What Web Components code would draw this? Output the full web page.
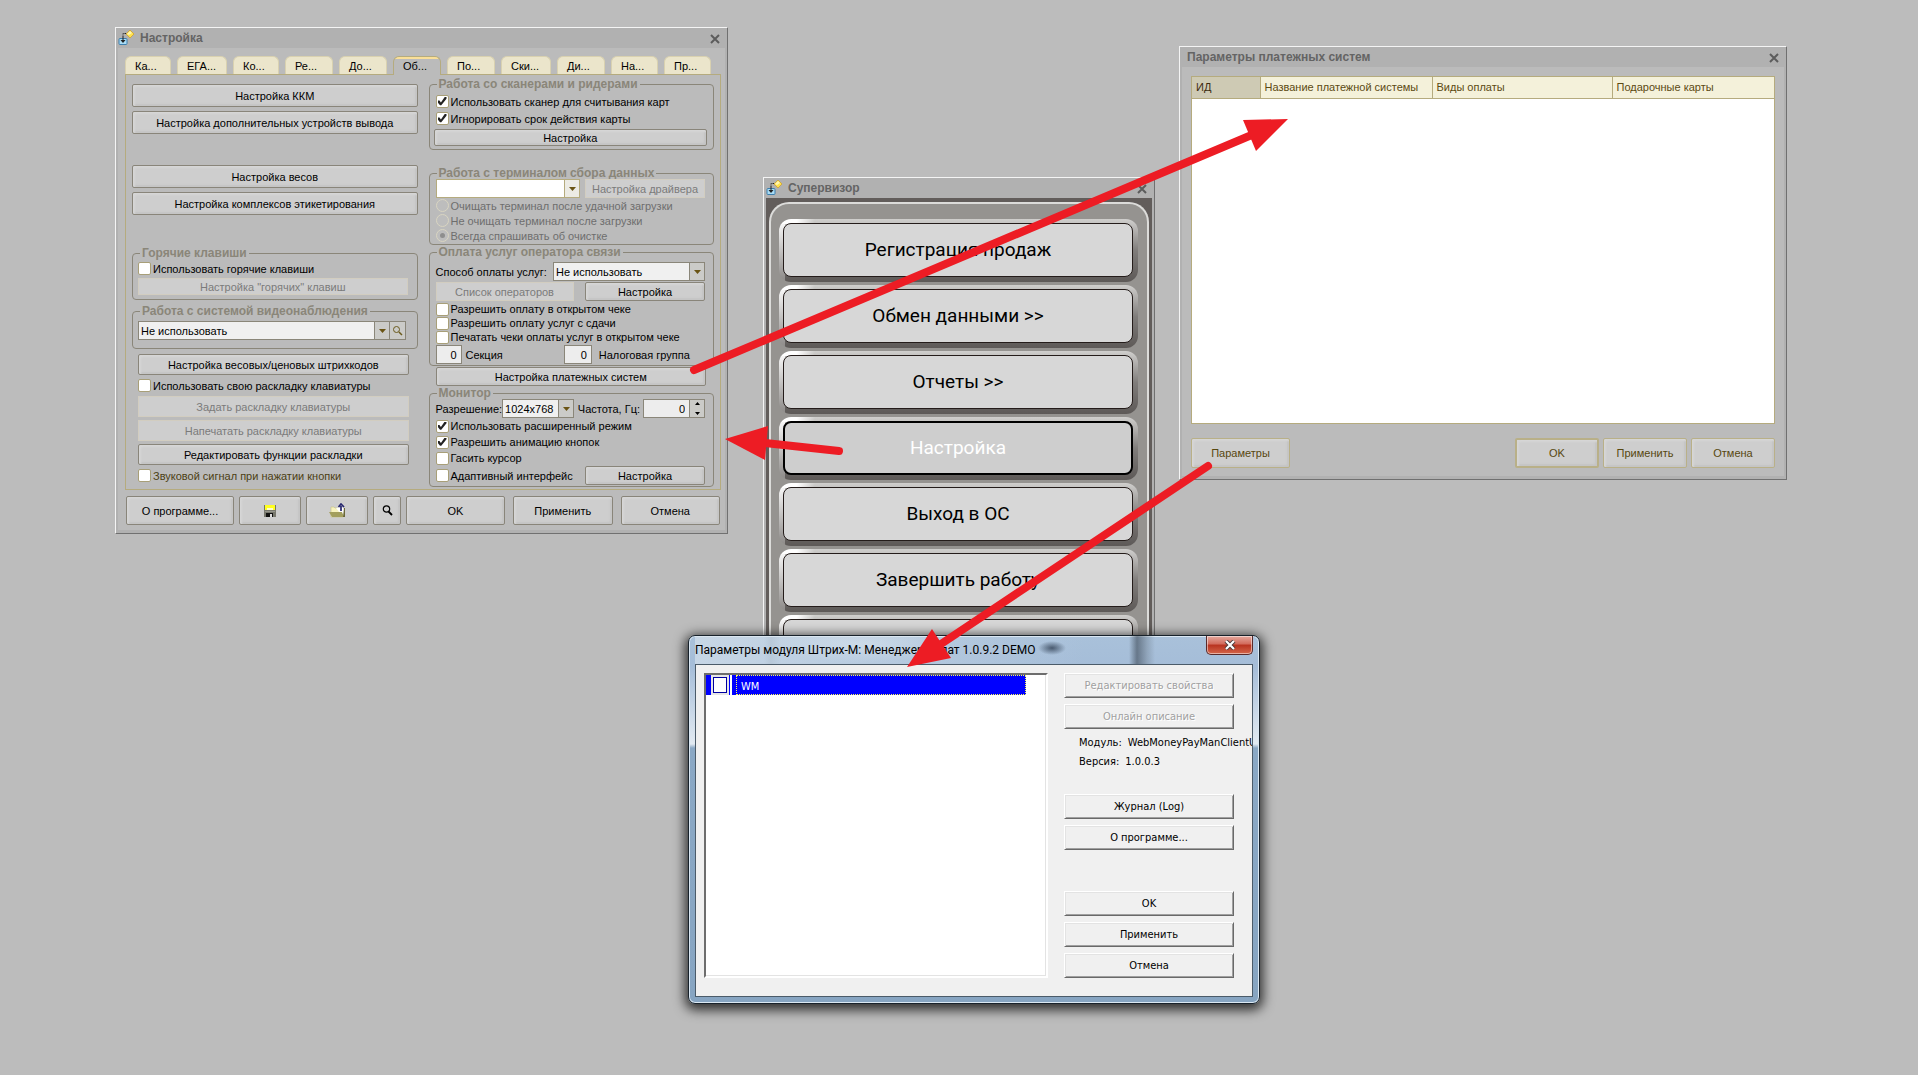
<!DOCTYPE html>
<html lang="ru">
<head>
<meta charset="utf-8">
<title>Настройка платежных систем</title>
<style>
    body {
        margin: 0;
        min-height: 100vh;
        background: #bcbcbc;
        font: 11px/14px "Liberation Sans", Arial, sans-serif;
        color: #000;
    }
</style>
</head>
<body>
<desktop-scene></desktop-scene>

<script>
class BaseElement extends HTMLElement {
    constructor() {
        super();
        this.attachShadow({ mode: 'open' });
    }

    connectedCallback() {
        const template = document.createElement('template');
        template.innerHTML = `
            <style>
            *, *::before { box-sizing: border-box; }
            button, input, select { font: inherit; color: inherit; margin: 0; }
            ${this.getStyles()}
            </style>
            ${this.getTemplate()}
        `;
        this.shadowRoot.appendChild(template.content.cloneNode(true));
    }

    getTemplate() {
        return '<slot></slot>';
    }

    getStyles() {
        return '';
    }
}

// Grey application window with a title bar
class AppWindow extends BaseElement {
    getTemplate() {
        const icon = this.hasAttribute('icon') ? `
            <svg width="17" height="17" viewBox="0 0 17 17" aria-hidden="true">
                <rect x="1" y="8.500" width="8" height="6" rx="1" fill="#a9dcf5" stroke="#3d7fae"/>
                <path d="M12 0l4 4-4 4-4-4z" fill="#ffe14d" stroke="#c99a2e" stroke-width=".7"/>
                <path d="M12 1l2 2-3 2-2-1z" fill="#fff6b0"/>
                <path d="M8 3.500H5V7" fill="none" stroke="#222" stroke-dasharray="1.500 1"/>
                <path d="M5 7v4" stroke="#222"/>
                <path d="M2.500 10h5L5 13z" fill="#222"/>
            </svg>` : '';
        return `
            <header>
                ${icon}
                <h1>${this.getAttribute('caption')}</h1>
                <button aria-label="Закрыть">
                    <svg width="10" height="10" viewBox="0 0 10 10"><path d="M1 1l8 8M9 1l-8 8" stroke="#5c5c5c" stroke-width="2"/></svg>
                </button>
            </header>
            <main><slot></slot></main>
        `;
    }

    getStyles() {
        return `
        :host {
            display: flex;
            flex-direction: column;
            box-sizing: border-box;
            border: 1px solid;
            border-color: #f4f4f4 #707070 #707070 #f4f4f4;
            background: #b1b1b1;
            padding: 0 2px 3px;
        }
        header {
            display: flex;
            align-items: center;
            height: 20px;
            padding: 0 3px 0 0;
        }
        header svg { display: block; flex: none; }
        h1 {
            flex: 1;
            margin: 0;
            padding-left: 5px;
            font-size: 12px;
            line-height: 22px;
            font-weight: bold;
            color: #646464;
        }
        button {
            padding: 2px 2px 0;
            border: 0;
            background: none;
        }
        main {
            flex: 1;
            background: #bbb;
        }
        `;
    }
}

class PushButton extends BaseElement {
    getTemplate() {
        const disabled = this.hasAttribute('disabled') ? 'disabled' : '';
        const label = this.hasAttribute('label') ? `aria-label="${this.getAttribute('label')}"` : '';
        return `<button ${disabled} ${label}><slot></slot></button>`;
    }

    getStyles() {
        return `
        :host {
            display: block;
            height: var(--button-height, 23px);
        }
        button {
            display: flex;
            align-items: center;
            justify-content: center;
            width: 100%;
            height: 100%;
            padding: 0;
            border: 1px solid #89857a;
            border-radius: 2px;
            background: #cecece;
            box-shadow: inset 2px 2px 2px #d6d6d6, inset -2px -2px 2px #c4c4c4;
            white-space: nowrap;
        }
        button:disabled {
            border-color: #d2cdc0;
            border-radius: 0;
            box-shadow: none;
            color: #7b7b7b;
        }
        :host([tone="sand"]) button {
            border-color: #b9b088;
            color: #57470f;
        }
        :host([default]) button { border-width: 2px; }
        `;
    }
}

class CheckItem extends BaseElement {
    getTemplate() {
        const type = this.getAttribute('type') || 'checkbox';
        const flags = ['checked', 'disabled'].filter((name) => this.hasAttribute(name)).join(' ');
        return `<label><input type="${type}" ${flags}><span><slot></slot></span></label>`;
    }

    getStyles() {
        return `
        :host { display: block; height: var(--check-height, 13px); }
        label {
            display: flex;
            align-items: center;
            gap: 2px;
            height: 100%;
            white-space: nowrap;
        }
        input {
            appearance: none;
            display: grid;
            place-items: center;
            flex: none;
            width: 13px;
            height: 13px;
            border: 1px solid #a89f78;
            border-radius: 2px;
            background: #fff;
        }
        input:checked::before {
            content: "";
            width: 9px;
            height: 9px;
            background: #222;
            clip-path: polygon(0 38%, 22% 38%, 38% 60%, 80% 0, 100% 0, 100% 20%, 42% 92%, 28% 92%, 0 58%);
        }
        input[type="radio"] {
            border-color: #d9d5c2;
            border-radius: 50%;
            background: #bdbdbd;
        }
        input[type="radio"]:checked::before {
            width: 5px;
            height: 5px;
            border-radius: 50%;
            background: #8e8e8e;
            clip-path: none;
        }
        input:disabled + span { color: #6e6e6e; }
        :host([tone="sand"]) { color: #4c3f14; }
        `;
    }
}

class GroupBox extends BaseElement {
    getTemplate() {
        return `
            <fieldset>
                <legend>${this.getAttribute('caption')}</legend>
                <div><slot></slot></div>
            </fieldset>
        `;
    }

    getStyles() {
        return `
        :host { display: block; }
        fieldset {
            min-width: 0;
            margin: 0;
            padding: 0;
            border: 1px solid #8a8679;
            border-radius: 4px;
        }
        legend {
            margin-left: 7px;
            padding: 0 2px;
            font-size: 12px;
            line-height: 12px;
            font-weight: bold;
            color: #8a8679;
        }
        div {
            display: flex;
            flex-direction: column;
            gap: var(--group-gap, 0);
            padding: var(--group-padding, 0 8px 1px 6px);
        }
        `;
    }
}

class ComboBox extends BaseElement {
    getTemplate() {
        const label = this.getAttribute('label');
        const text = this.hasAttribute('quiet') ? '' : `<span class="label">${label}</span>`;
        const search = this.hasAttribute('search') ? `
            <button aria-label="Найти">
                <svg width="11" height="11" viewBox="0 0 11 11"><circle cx="4.500" cy="4.500" r="3" fill="none" stroke="#6a5a1c"/><path d="M7 7l3 3" stroke="#6a5a1c" stroke-width="1.500"/></svg>
            </button>` : '';
        return `
            <label>
                ${text}
                <span class="field">
                    <select aria-label="${label}"><option>${this.getAttribute('value') || ''}</option></select>
                    <svg width="7" height="4" viewBox="0 0 7 4"><path d="M0 0h7L3.500 4z" fill="#6a5414"/></svg>
                </span>
            </label>
            ${search}
        `;
    }

    getStyles() {
        return `
        :host { display: flex; height: 19px; }
        label {
            display: flex;
            align-items: center;
            flex: 1;
            white-space: nowrap;
        }
        .label { flex: 1; }
        .field {
            display: grid;
            align-items: center;
            width: var(--combo-width, 100%);
            height: 19px;
        }
        select {
            grid-area: 1 / 1;
            appearance: none;
            width: 100%;
            height: 100%;
            padding: 0 16px 0 2px;
            border: 1px solid #8a8679;
            border-radius: 0;
            background: linear-gradient(90deg, transparent calc(100% - 15px), #8a8679 0, #8a8679 calc(100% - 14px), #cbcbc8 0), #f0f0f0;
        }
        :host([blank]) select {
            border-color: #b5ab7e;
            background: linear-gradient(90deg, transparent calc(100% - 15px), #b5ab7e 0, #b5ab7e calc(100% - 14px), #ecebe4 0), #fff;
        }
        svg { pointer-events: none; }
        .field svg {
            grid-area: 1 / 1;
            justify-self: end;
            margin-right: 4px;
        }
        button {
            display: grid;
            place-items: center;
            width: 16px;
            padding: 0;
            border: 1px solid #8a8679;
            border-left: 0;
            background: #cbcbc8;
        }
        `;
    }
}

class NumberField extends BaseElement {
    getTemplate() {
        const spin = this.hasAttribute('spin') ? `
            <span class="spin">
                <svg width="7" height="13" viewBox="0 0 7 13"><path d="M1 3h5L3.500 0zM1 10h5L3.500 13z"/></svg>
            </span>` : '';
        return `
            <label>
                <span class="label">${this.getAttribute('label')}</span>
                <span class="field"><input type="text" inputmode="numeric" value="0">${spin}</span>
            </label>
        `;
    }

    getStyles() {
        return `
        :host { display: block; height: 19px; }
        label {
            display: flex;
            flex-direction: row-reverse;
            justify-content: flex-end;
            align-items: center;
            gap: var(--label-gap, 4px);
            height: 100%;
            white-space: nowrap;
        }
        :host([spin]) label {
            flex-direction: row;
        }
        .field { display: flex; height: 19px; }
        input {
            width: var(--number-width, 26px);
            padding: 0 4px;
            border: 1px solid #8a8679;
            background: #ededed;
            text-align: right;
        }
        .spin {
            display: grid;
            place-items: center;
            width: 15px;
            border: 1px solid #8a8679;
            border-left: 0;
            background: #cbcbc8;
        }
        `;
    }
}

class TabStrip extends BaseElement {
    getTemplate() {
        const tabs = [
            ['Ка...', 46], ['ЕГА...', 50], ['Ко...', 46], ['Ре...', 48], ['До...', 48], ['Об...', 48],
            ['По...', 48], ['Ски...', 50], ['Ди...', 48], ['На...', 47], ['Пр...', 47]
        ];
        return `<nav role="tablist">${tabs.map(([text, width]) => `
            <button role="tab" aria-selected="${text === 'Об...'}" style="width: ${width}px">${text}</button>`).join('')}
        </nav>`;
    }

    getStyles() {
        return `
        :host { display: block; }
        nav { display: flex; gap: 6px; }
        button {
            height: 18px;
            padding: 0 0 0 9px;
            border: 1px solid #d9d1b0;
            border-bottom: 0;
            border-radius: 6px 6px 0 0;
            background: #ebe5cb;
            text-align: left;
        }
        button[aria-selected="true"] {
            height: 19px;
            margin-bottom: -1px;
            border-color: #b5ab7e;
            background: linear-gradient(#fadf98 2px, #bbb 2px);
            z-index: 1;
        }
        `;
    }
}

// Main settings window: tabs, two columns of options, bottom button bar
class SettingsForm extends BaseElement {
    getTemplate() {
        return `
            <tab-strip></tab-strip>
            <section class="panel">
                <div class="column left">
                    <div class="stack">
                        <push-button>Настройка ККМ</push-button>
                        <push-button>Настройка дополнительных устройств вывода</push-button>
                    </div>
                    <div class="stack">
                        <push-button>Настройка весов</push-button>
                        <push-button>Настройка комплексов этикетирования</push-button>
                    </div>
                    <div class="groups">
                        <group-box caption="Горячие клавиши" class="keys">
                            <check-item>Использовать горячие клавиши</check-item>
                            <push-button disabled class="thin">Настройка "горячих" клавиш</push-button>
                        </group-box>
                        <group-box caption="Работа с системой видеонаблюдения" class="video">
                            <combo-box quiet search label="Система видеонаблюдения" value="Не использовать"></combo-box>
                        </group-box>
                        <div class="stack inset">
                            <push-button>Настройка весовых/ценовых штрихкодов</push-button>
                            <check-item>Использовать свою раскладку клавиатуры</check-item>
                            <div class="stack keyboard">
                                <push-button disabled>Задать раскладку клавиатуры</push-button>
                                <push-button disabled>Напечатать раскладку клавиатуры</push-button>
                                <push-button>Редактировать функции раскладки</push-button>
                            </div>
                            <check-item tone="sand">Звуковой сигнал при нажатии кнопки</check-item>
                        </div>
                    </div>
                </div>
                <div class="column right">
                    <group-box caption="Работа со сканерами и ридерами" class="scanner">
                        <check-item checked>Использовать сканер для считывания карт</check-item>
                        <check-item checked>Игнорировать срок действия карты</check-item>
                        <push-button class="thin">Настройка</push-button>
                    </group-box>
                    <group-box caption="Работа с терминалом сбора данных" class="terminal">
                        <div class="row">
                            <combo-box quiet blank label="Терминал сбора данных"></combo-box>
                            <push-button disabled>Настройка драйвера</push-button>
                        </div>
                        <check-item type="radio" disabled>Очищать терминал после удачной загрузки</check-item>
                        <check-item type="radio" disabled>Не очищать терминал после загрузки</check-item>
                        <check-item type="radio" disabled checked>Всегда спрашивать об очистке</check-item>
                    </group-box>
                    <group-box caption="Оплата услуг оператора связи" class="payment">
                        <combo-box label="Способ оплаты услуг:" value="Не использовать"></combo-box>
                        <div class="row">
                            <push-button disabled class="wide">Список операторов</push-button>
                            <push-button>Настройка</push-button>
                        </div>
                        <div>
                            <check-item>Разрешить оплату в открытом чеке</check-item>
                            <check-item>Разрешить оплату услуг с сдачи</check-item>
                            <check-item>Печатать чеки оплаты услуг в открытом чеке</check-item>
                        </div>
                        <div class="row numbers">
                            <number-field label="Секция"></number-field>
                            <number-field label="Налоговая группа" class="tax"></number-field>
                        </div>
                    </group-box>
                    <push-button class="systems">Настройка платежных систем</push-button>
                    <group-box caption="Монитор" class="monitor">
                        <div class="row">
                            <combo-box label="Разрешение:" value="1024x768"></combo-box>
                            <number-field spin label="Частота, Гц:"></number-field>
                        </div>
                        <check-item checked>Использовать расширенный режим</check-item>
                        <check-item checked>Разрешить анимацию кнопок</check-item>
                        <check-item>Гасить курсор</check-item>
                        <div class="row">
                            <check-item>Адаптивный интерфейс</check-item>
                            <push-button>Настройка</push-button>
                        </div>
                    </group-box>
                </div>
            </section>
            <footer>
                <div class="tools">
                    <push-button class="about">О программе...</push-button>
                    <push-button class="tool" label="Сохранить">
                        <svg width="12" height="12" viewBox="0 0 12 12" shape-rendering="crispEdges"><path d="M0 0h12v12H0z" fill="#77776c"/><path d="M1 0h10v5H1z" fill="#ffff20"/><path d="M3 3h6v2H3z" fill="#fffbd0"/><path d="M1 6h10v1H1z" fill="#96968c"/><path d="M2 8h7v4H2z" fill="#111"/><path d="M6 9h2v3H6z" fill="#ddd"/></svg>
                    </push-button>
                    <push-button class="tool" label="Загрузить">
                        <svg width="17" height="16" viewBox="0 0 17 16"><path d="M2 6V4h3l1 1h8v9H2z" fill="#f7f3bd" stroke="#c9c48c" stroke-width=".7"/><path d="M7 5l6-1 2 2v8l-4-4z" fill="#fff"/><path d="M0 9h13l2 5H3z" fill="#a39f5d"/><path d="M15 5h1v9h-2z" fill="#6b6838"/><path d="M12 8V3M9.500 4L12 1l3 3" fill="none" stroke="#26266e" stroke-width="1.700"/></svg>
                    </push-button>
                    <push-button class="find" label="Найти">
                        <svg width="11" height="11" viewBox="0 0 11 11"><circle cx="4.500" cy="4" r="3.200" fill="none" stroke="#000" stroke-width="1.200"/><path d="M6.500 6.500L10 10" stroke="#000" stroke-width="1.800"/></svg>
                    </push-button>
                    <push-button>OK</push-button>
                </div>
                <push-button>Применить</push-button>
                <push-button>Отмена</push-button>
            </footer>
        `;
    }

    getStyles() {
        return `
        :host {
            display: block;
            padding: 8px 4px 5px 7px;
        }
        .panel {
            display: grid;
            grid-template-columns: 1fr 1fr;
            gap: 11px;
            padding: 0 6px 2px;
            border: 1px solid #b5ab7e;
        }
        .column { display: flex; flex-direction: column; }
        .left { gap: 31px; padding-top: 9px; }
        .right { padding-top: 3px; }
        .stack { display: flex; flex-direction: column; gap: 4px; }
        .groups { display: flex; flex-direction: column; gap: 5px; padding-top: 1px; }
        .inset {
            --button-height: 21px;
            padding: 0 9px 0 6px;
        }
        .keyboard { gap: 3px; }
        .thin { --button-height: 17px; }
        .keys { --group-gap: 3px; --group-padding: 3px 9px 4px 5px; }
        .video { --group-padding: 4px 11px 8px 5px; }
        .scanner { --group-gap: 4px; --group-padding: 5px 6px 3px 4px; margin-bottom: 17px; }
        .scanner check-item { padding-left: 2px; }
        .terminal { --check-height: 15px; margin-bottom: 1px; }
        .payment { --group-gap: 1px; --group-padding: 4px 8px 1px 6px; --check-height: 14px; --combo-width: 152px; }
        .systems { margin: 1px 8px 1px 7px; --button-height: 19px; }
        .monitor { --check-height: 16px; }
        .row {
            --button-height: 19px;
            display: flex;
            justify-content: space-between;
            align-items: center;
        }
        .row push-button { width: 120px; }
        .row .wide { width: 138px; }
        .terminal combo-box { width: 144px; }
        .monitor combo-box { width: 138px; --combo-width: 72px; }
        .monitor number-field { --number-width: 47px; --label-gap: 3px; }
        .numbers { justify-content: flex-start; gap: 61px; }
        .tax { --label-gap: 7px; --number-width: 28px; }
        footer {
            --button-height: 29px;
            display: flex;
            gap: 8px;
            padding: 6px 1px 0;
        }
        footer push-button { flex: 1; }
        .tools { display: flex; gap: 5px; width: 379px; }
        .tools .about { flex: none; width: 108px; }
        .tools .tool { flex: none; width: 62px; }
        .tools .find { flex: none; width: 28px; }
        `;
    }
}

class SupervisorMenu extends BaseElement {
    getTemplate() {
        const items = ['Регистрация продаж', 'Обмен данными >>', 'Отчеты >>', 'Настройка', 'Выход в ОС', 'Завершить работу', ''];
        return `<nav>${items.map((text) => `
            <button class="${text === 'Настройка' ? 'active' : ''}"><span>${text}</span></button>`).join('')}
        </nav>`;
    }

    getStyles() {
        return `
        :host {
            display: block;
            padding: 4px 3px 0;
            background: #625d5b;
        }
        nav {
            display: flex;
            flex-direction: column;
            gap: 3px;
            padding: 15px 9px 4px 8px;
            border: 2px solid #dcdcda;
            border-bottom: 0;
            border-radius: 20px 20px 0 0;
            background: #959390;
        }
        button {
            display: flex;
            height: 63px;
            padding: 4px 5px 5px 4px;
            border: 0;
            border-radius: 12px;
            background:
                linear-gradient(100deg, #fff 0, #fff 5%, transparent 10%) 0 0 / 100% 5px no-repeat,
                linear-gradient(#fff, #8b8886) 0 0 / 6px 100% no-repeat,
                linear-gradient(#d0cfcd, #807d7b 50%, #5d5957);
            font: 19px/24px Roboto, "Liberation Sans", sans-serif;
        }
        span {
            display: grid;
            flex: 1;
            place-items: center;
            border: 1px solid #241c1a;
            border-radius: 8px;
            background: #d7d7d7;
        }
        .active span {
            border: 2px solid #000;
            background: #cecece;
            color: #fff;
        }
        `;
    }
}

class PaymentSystems extends BaseElement {
    getTemplate() {
        return `
            <div class="list">
                <table>
                    <colgroup><col class="id"><col class="name"><col class="kind"><col></colgroup>
                    <thead>
                        <tr><th>ИД</th><th>Название платежной системы</th><th>Виды оплаты</th><th>Подарочные карты</th></tr>
                    </thead>
                </table>
            </div>
            <footer>
                <push-button tone="sand" class="params">Параметры</push-button>
                <push-button tone="sand" default>OK</push-button>
                <push-button tone="sand">Применить</push-button>
                <push-button tone="sand">Отмена</push-button>
            </footer>
        `;
    }

    getStyles() {
        return `
        :host { display: block; padding: 9px 9px 8px; }
        .list {
            height: 348px;
            border: 1px solid #b5ab7e;
            background: #fff;
        }
        table {
            width: 100%;
            table-layout: fixed;
            border-collapse: collapse;
        }
        .id { width: 68px; }
        .name { width: 172px; }
        .kind { width: 180px; }
        th {
            height: 21px;
            padding: 0 0 0 4px;
            border-right: 1px solid #b5ab7e;
            border-bottom: 1px solid #b5ab7e;
            background: #f4f1da;
            color: #5c4a12;
            font-weight: normal;
            text-align: left;
            white-space: nowrap;
        }
        th:first-child { background: #cecab4; color: #3c2c10; }
        th:last-child { border-right: 0; }
        footer {
            --button-height: 30px;
            display: flex;
            gap: 4px;
            margin-top: 14px;
        }
        footer push-button { width: 84px; }
        footer .params { width: 99px; margin-right: auto; }
        `;
    }
}

// Windows 7 style dialog with a glass frame
class ModuleDialog extends BaseElement {
    getTemplate() {
        return `
            <header>
                <h1>Параметры модуля Штрих-М: Менеджер оплат 1.0.9.2 DEMO</h1>
                <button class="close" aria-label="Закрыть">
                    <svg width="12" height="10" viewBox="0 0 12 10"><path d="M2 1l8 8M10 1L2 9" stroke="#4b3a3a" stroke-width="4"/><path d="M2 1l8 8M10 1L2 9" stroke="#fff" stroke-width="2.200"/></svg>
                </button>
            </header>
            <div class="client">
                <div class="list">
                    <label class="item"><span class="mark"><input type="checkbox"></span><span class="text">WM</span></label>
                </div>
                <div class="side">
                    <div class="stack">
                        <button disabled>Редактировать свойства</button>
                        <button disabled>Онлайн описание</button>
                    </div>
                    <dl>
                        <div><dt>Модуль:</dt><dd>WebMoneyPayManClientU</dd></div>
                        <div><dt>Версия:</dt><dd>1.0.0.3</dd></div>
                    </dl>
                    <div class="stack about">
                        <button>Журнал (Log)</button>
                        <button>О программе...</button>
                    </div>
                    <div class="stack">
                        <button>OK</button>
                        <button>Применить</button>
                        <button>Отмена</button>
                    </div>
                </div>
            </div>
        `;
    }

    getStyles() {
        return `
        :host {
            display: block;
            box-sizing: border-box;
            padding: 0 6px 6px;
            border: 1px solid #18222b;
            border-radius: 7px;
            background:
                radial-gradient(ellipse 90px 18px at 30% 8px, rgba(215, 226, 238, .6), transparent),
                linear-gradient(90deg, transparent 75px, rgba(120, 140, 160, .35) 82px, transparent 92px),
                linear-gradient(#a9c1da 0, #a5bdd8 30px, #e2eaf2 108px, #8aa8c5 112px, #87a5c2);
            background-size: 100% 28px, 100% 28px, 100% 100%;
            background-repeat: no-repeat;
            box-shadow: inset 0 0 0 1px #dbe8f3, 0 3px 12px 3px rgba(0, 0, 0, .75);
            font-family: "DejaVu Sans Condensed", Tahoma, sans-serif;
        }
        header {
            display: flex;
            align-items: flex-start;
            height: 28px;
            background:
                radial-gradient(ellipse 14px 7px at 357px 12px, rgba(40, 55, 75, .75), transparent),
                linear-gradient(90deg, transparent 434px, rgba(60, 72, 85, .6) 442px, rgba(110, 125, 140, .4) 452px, transparent 460px),
                linear-gradient(90deg, rgba(220, 230, 238, .6) 0, transparent 70%);
        }
        h1 {
            flex: 1;
            margin: 0;
            font: 12px/29px Roboto, "Segoe UI", sans-serif;
            white-space: nowrap;
        }
        button {
            height: 25px;
            padding: 0;
            border: 1px solid;
            border-color: #fff #696969 #696969 #fff;
            background: #f0f0f0;
            box-shadow: inset 1px 1px #e3e3e3, inset -1px -1px #a0a0a0;
        }
        button:disabled { color: #a0a0a0; text-shadow: 1px 1px #fff; }
        .close {
            display: grid;
            place-items: center;
            width: 47px;
            height: 19px;
            border: 1px solid #5a2a2a;
            border-top: 0;
            border-radius: 0 0 5px 5px;
            background: linear-gradient(#e5a99e, #d2695a 45%, #b8321f 50%, #d4664a);
            box-shadow: inset 0 0 0 1px rgba(255, 255, 255, .5);
        }
        .client {
            display: flex;
            gap: 16px;
            padding: 8px 18px 18px 8px;
            overflow: hidden;
            border: 1px solid #4b5b69;
            background: #f0f0f0;
        }
        .list {
            flex: 1;
            border: 2px solid;
            border-color: #6d6d6d #fff #fff #6d6d6d;
            box-shadow: inset -1px -1px #e3e3e3;
            background: #fff;
        }
        .item {
            display: flex;
            gap: 4px;
            width: 320px;
            height: 20px;
            background: #00f;
            color: #fff;
        }
        .mark {
            display: grid;
            place-items: center;
            width: 26px;
            padding-left: 3px;
            border-right: 2px solid #fff;
        }
        input {
            appearance: none;
            width: 18px;
            height: 20px;
            border: 2px solid #e6e6e6;
            outline: 1px solid #0000a0;
            outline-offset: -3px;
            background: #fff;
        }
        .text {
            flex: 1;
            padding: 4px 0 0 4px;
            border: 1px dotted #ffff50;
            line-height: 14px;
        }
        .side {
            display: flex;
            flex-direction: column;
            width: 170px;
        }
        .stack { display: flex; flex-direction: column; gap: 6px; }
        dl {
            margin: 4px 0 23px;
            padding-left: 15px;
            line-height: 19px;
        }
        dl div { display: flex; gap: 6px; white-space: nowrap; }
        dt, dd { margin: 0; }
        .about { margin-bottom: 41px; }
        `;
    }
}

// Red arrows that lead from a button to the window it opens
class FlowArrows extends BaseElement {
    getTemplate() {
        return `
            <svg width="1300" height="700" viewBox="0 0 1300 700" fill="#ed1c24" stroke="#ed1c24" stroke-width="8" stroke-linecap="round">
                <path d="M694 370L1254 134"/>
                <path d="M1288 119l-45 1 13 31z" stroke="none"/>
                <path d="M839 451l-74-8"/>
                <path d="M725 439l43-13-3 34z" stroke="none"/>
                <path d="M1208 466L938 646"/>
                <path d="M907 667l25-38 19 29z" stroke="none"/>
            </svg>
        `;
    }

    getStyles() {
        return `
        :host { display: block; pointer-events: none; }
        svg { display: block; }
        `;
    }
}

class DesktopScene extends BaseElement {
    getTemplate() {
        return `
            <app-window icon caption="Настройка" class="settings"><settings-form></settings-form></app-window>
            <app-window icon caption="Супервизор" class="supervisor"><supervisor-menu></supervisor-menu></app-window>
            <app-window caption="Параметры платежных систем" class="systems"><payment-systems></payment-systems></app-window>
            <module-dialog></module-dialog>
            <flow-arrows></flow-arrows>
        `;
    }

    getStyles() {
        return `
        :host {
            display: block;
            position: relative;
            min-height: 100vh;
        }
        app-window, module-dialog, flow-arrows { position: absolute; }
        .settings { left: 115px; top: 27px; width: 613px; }
        .supervisor { left: 763px; top: 177px; width: 392px; }
        .systems { left: 1179px; top: 46px; width: 608px; }
        module-dialog { left: 688px; top: 635px; width: 572px; }
        flow-arrows { left: 0; top: 0; }
        `;
    }
}

customElements.define('app-window', AppWindow);
customElements.define('push-button', PushButton);
customElements.define('check-item', CheckItem);
customElements.define('group-box', GroupBox);
customElements.define('combo-box', ComboBox);
customElements.define('number-field', NumberField);
customElements.define('tab-strip', TabStrip);
customElements.define('settings-form', SettingsForm);
customElements.define('supervisor-menu', SupervisorMenu);
customElements.define('payment-systems', PaymentSystems);
customElements.define('module-dialog', ModuleDialog);
customElements.define('flow-arrows', FlowArrows);
customElements.define('desktop-scene', DesktopScene);
</script>
</body>
</html>
